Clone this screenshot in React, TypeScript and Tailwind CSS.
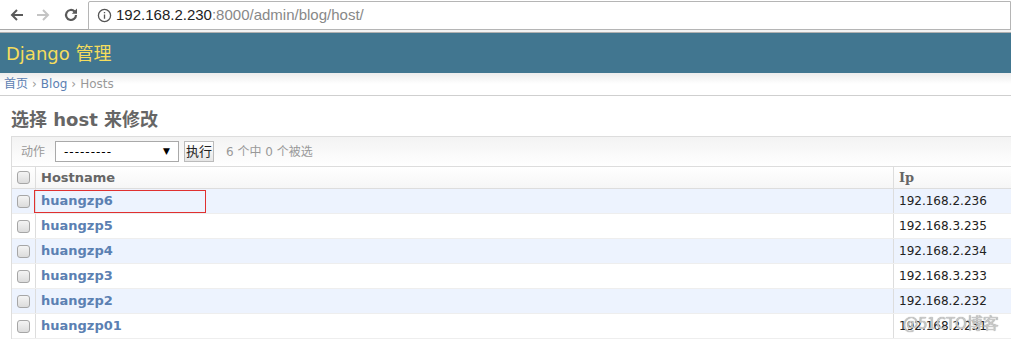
import React from 'react';

const hosts = [
  { name: 'huangzp6', ip: '192.168.2.236' },
  { name: 'huangzp5', ip: '192.168.3.235' },
  { name: 'huangzp4', ip: '192.168.2.234' },
  { name: 'huangzp3', ip: '192.168.3.233' },
  { name: 'huangzp2', ip: '192.168.2.232' },
  { name: 'huangzp01', ip: '192.168.2.231' },
];

const Box = () => (
  <span className="block w-[13px] h-[13px] rounded-[3px] border border-[#a6a6a6] bg-gradient-to-b from-[#f4f4f4] to-[#dcdcdc]" />
);

const App = () => {
  return (
    <div className="w-[1011px] h-[341px] overflow-hidden bg-white relative" style={{ fontFamily: 'Verdana, "DejaVu Sans", "Noto Sans CJK SC", sans-serif' }}>
      {/* browser bar */}
      <div className="h-[30px] flex items-center border-b border-[#a9a9a9]">
        <div className="w-[88px] flex items-center text-[#5a5a5a]">
          <svg className="ml-[9px]" width="16" height="16" viewBox="0 0 16 16" fill="none" stroke="currentColor" strokeWidth="2">
            <path d="M14 8H3M8 3L3 8l5 5" />
          </svg>
          <svg className="ml-[10px] text-[#c4c4c4]" width="16" height="16" viewBox="0 0 16 16" fill="none" stroke="currentColor" strokeWidth="2">
            <path d="M2 8h11M8 3l5 5-5 5" />
          </svg>
          <svg className="ml-[12px]" width="16" height="16" viewBox="0 0 16 16">
            <path d="M13 8a5 5 0 1 1-1.5-3.6" fill="none" stroke="currentColor" strokeWidth="2.2" />
            <path d="M14 1.5v5.2H8.8z" fill="currentColor" />
          </svg>
        </div>
        <div className="flex-1 h-[29px] mt-[1px] border border-[#b5b5b5] rounded-tl-[2px] flex items-center pl-[8px]" style={{ fontFamily: '"Liberation Sans", Arial, sans-serif' }}>
          <svg width="15" height="15" viewBox="0 0 16 16" fill="none" stroke="#555" strokeWidth="1.4">
            <circle cx="8" cy="8" r="6.5" />
            <path d="M8 7v4.5M8 4.2v1.3" />
          </svg>
          <span className="ml-[4px] text-[15px] text-[#222]">192.168.2.230</span>
          <span className="text-[15px] text-[#888]">:8000/admin/blog/host/</span>
        </div>
      </div>
      <div className="h-[3px] bg-[#f2f2f2] border-b border-[#b0b0b0]" />

      {/* django header */}
      <div className="h-[40px] bg-[#417690] flex items-center pl-[6px]">
        <span className="text-[18px] text-[#f5dd5d]">Django 管理</span>
      </div>

      {/* breadcrumbs */}
      <div className="h-[23px] bg-gradient-to-b from-[#ececec] via-white to-white border-b border-[#cfcfcf] flex items-center pl-[4px] text-[12px]">
        <span className="text-[#5b80b2]">首页</span>
        <span className="text-[#999] mx-[4px]">›</span>
        <span className="text-[#5b80b2]">Blog</span>
        <span className="text-[#999] mx-[4px]">›</span>
        <span className="text-[#999]">Hosts</span>
      </div>

      {/* content */}
      <div className="pl-[11px] pt-[13px]">
        <h1 className="text-[18px] font-bold text-[#666] leading-[22px]">选择 host 来修改</h1>
        <div className="mt-[5px] border-l border-t border-[#ddd]">
          <div className="h-[30px] bg-gradient-to-b from-[#f3f3f3] to-white border-b border-[#ddd] flex items-center text-[12px]">
            <span className="ml-[9px] text-[#999]">动作</span>
            <div className="ml-[10px] w-[124px] h-[21px] border border-[#a9a9a9] bg-white flex items-center justify-between px-[8px]">
              <span className="text-[#000] text-[12px] tracking-[1px]">---------</span>
              <span className="text-[9px] text-black">▼</span>
            </div>
            <div className="ml-[5px] h-[21px] px-[1px] border border-[#bbb] bg-gradient-to-b from-white to-[#e6e6e6] flex items-center text-[13px] text-[#222]">执行</div>
            <span className="ml-[12px] text-[#999]">6 个中 0 个被选</span>
          </div>
          <div className="h-[22px] flex items-center bg-gradient-to-b from-white to-[#f6f6f6] border-b border-[#ddd] text-[13px] font-bold text-[#666]">
            <div className="w-[24px] h-full flex items-center justify-center border-r border-[#ddd]"><Box /></div>
            <div className="w-[858px] h-full flex items-center pl-[5px] border-r border-[#ddd]">Hostname</div>
            <div className="flex-1 h-full flex items-center pl-[5px]" style={{ fontFamily: '"DejaVu Serif", serif' }}>Ip</div>
          </div>
          {hosts.map((h, i) => (
            <div key={h.name} className={`h-[25px] flex items-center border-b border-[#eee] ${i % 2 === 0 ? 'bg-[#edf3fe]' : 'bg-white'}`}>
              <div className="w-[24px] h-full flex items-center justify-center border-r border-[#ddd]"><Box /></div>
              <div className="w-[858px] h-full flex items-center pl-[5px] border-r border-[#ddd] relative">
                <span className="text-[13px] font-bold text-[#5b80b2]">{h.name}</span>
                {i === 0 && <span className="absolute left-[-2px] top-[1px] w-[172px] h-[23px] border border-[#e03030]" />}
              </div>
              <div className="flex-1 h-full flex items-center pl-[5px] text-[12px] text-[#222]">{h.ip}</div>
            </div>
          ))}
        </div>
      </div>

      <span className="absolute left-[903px] top-[310px] text-[16px] text-[#c8c8c8]" style={{ fontFamily: '"Noto Sans CJK SC", sans-serif', textShadow: '0 0 1px #888' }}>@51CTO博客</span>
    </div>
  );
};

export default App;
